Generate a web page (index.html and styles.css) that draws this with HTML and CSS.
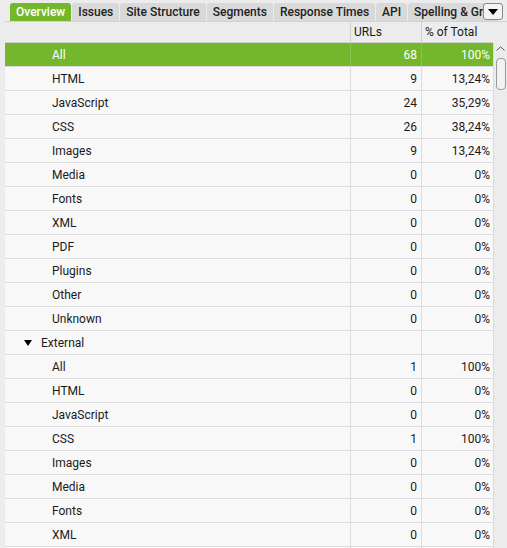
FILE: index.html
```html
<!DOCTYPE html>
<html>
<head>
<meta charset="utf-8">
<link rel="stylesheet" href="styles.css">
</head>
<body>
<div class="app">
  <div class="tabs">
    <div class="tab active">Overview</div>
    <div class="tab">Issues</div>
    <div class="tab">Site Structure</div>
    <div class="tab">Segments</div>
    <div class="tab">Response Times</div>
    <div class="tab">API</div>
    <div class="tab last">Spelling &amp; Grammar</div>
    <div class="menu-btn"><svg width="10" height="6" viewBox="0 0 10 6"><path d="M0 0H10L5 6Z" fill="#000"/></svg></div>
  </div>
  <div class="main">
    <div class="grid">
      <div class="row head"><div class="c name"></div><div class="c num">URLs</div><div class="c pct">% of Total</div></div>
      <div class="row sel"><div class="c name">All</div><div class="c num">68</div><div class="c pct">100%</div></div>
      <div class="row"><div class="c name">HTML</div><div class="c num">9</div><div class="c pct">13,24%</div></div>
      <div class="row"><div class="c name">JavaScript</div><div class="c num">24</div><div class="c pct">35,29%</div></div>
      <div class="row"><div class="c name">CSS</div><div class="c num">26</div><div class="c pct">38,24%</div></div>
      <div class="row"><div class="c name">Images</div><div class="c num">9</div><div class="c pct">13,24%</div></div>
      <div class="row"><div class="c name">Media</div><div class="c num">0</div><div class="c pct">0%</div></div>
      <div class="row"><div class="c name">Fonts</div><div class="c num">0</div><div class="c pct">0%</div></div>
      <div class="row"><div class="c name">XML</div><div class="c num">0</div><div class="c pct">0%</div></div>
      <div class="row"><div class="c name">PDF</div><div class="c num">0</div><div class="c pct">0%</div></div>
      <div class="row"><div class="c name">Plugins</div><div class="c num">0</div><div class="c pct">0%</div></div>
      <div class="row"><div class="c name">Other</div><div class="c num">0</div><div class="c pct">0%</div></div>
      <div class="row"><div class="c name">Unknown</div><div class="c num">0</div><div class="c pct">0%</div></div>
      <div class="row"><div class="c name group"><svg class="tri" width="8" height="6" viewBox="0 0 8 6"><path d="M0 0H8L4 6Z" fill="#000"/></svg>External</div><div class="c num"></div><div class="c pct"></div></div>
      <div class="row"><div class="c name">All</div><div class="c num">1</div><div class="c pct">100%</div></div>
      <div class="row"><div class="c name">HTML</div><div class="c num">0</div><div class="c pct">0%</div></div>
      <div class="row"><div class="c name">JavaScript</div><div class="c num">0</div><div class="c pct">0%</div></div>
      <div class="row"><div class="c name">CSS</div><div class="c num">1</div><div class="c pct">100%</div></div>
      <div class="row"><div class="c name">Images</div><div class="c num">0</div><div class="c pct">0%</div></div>
      <div class="row"><div class="c name">Media</div><div class="c num">0</div><div class="c pct">0%</div></div>
      <div class="row"><div class="c name">Fonts</div><div class="c num">0</div><div class="c pct">0%</div></div>
      <div class="row"><div class="c name">XML</div><div class="c num">0</div><div class="c pct">0%</div></div>
      <div class="row"><div class="c name">PDF</div><div class="c num">0</div><div class="c pct">0%</div></div>
    </div>
    <div class="scrollbar">
      <svg class="up" width="9" height="5" viewBox="0 0 9 5"><path d="M0.5 4.5L4.5 0.8L8.5 4.5" fill="none" stroke="#555" stroke-width="1"/></svg>
      <div class="thumb"></div>
    </div>
  </div>
</div>
</body>
</html>
```
FILE: styles.css
```css
html, body {
  margin: 0;
  padding: 0;
  background: #ececec;
}
body {
  font-family: Roboto, "Liberation Sans", sans-serif;
  font-size: 12px;
  color: #1a1a1a;
}
.app {
  width: 507px;
  height: 548px;
  overflow: hidden;
  position: relative;
}
.tabs {
  display: flex;
  align-items: flex-end;
  height: 21px;
  margin-left: 5px;
  padding-left: 5px;
  gap: 1px;
  border-bottom: 1px solid #d2d2d2;
  white-space: nowrap;
  overflow: hidden;
  position: relative;
}
.tab {
  height: 18px;
  line-height: 18px;
  padding: 0 6px;
  background: #d9d9d9;
  border-radius: 3px 3px 0 0;
  font-weight: 500;
  color: #222;
  flex: none;
}
.tab.last {
  max-width: 78px;
  overflow: hidden;
}
.tab.active {
  background: #74b72c;
  color: #fff;
}
.menu-btn {
  position: absolute;
  left: 478px;
  top: 3px;
  width: 18px;
  height: 15px;
  background: #f4f4f4;
  border: 1px solid #8a8a8a;
  border-radius: 3px;
  display: flex;
  align-items: center;
  justify-content: center;
}
.main {
  display: flex;
  margin-left: 5px;
}
.grid {
  width: 488px;
}
.row {
  display: flex;
  height: 23px;
  border-bottom: 1px solid #dcdcdc;
  background: #f8f8f8;
}
.row.head {
  height: 20px;
  background: #ececec;
  border-bottom: 1px solid #d0d0d0;
}
.row.sel {
  background: #74b72c;
  color: #fff;
}
.c {
  display: flex;
  align-items: center;
  box-sizing: border-box;
}
.name {
  width: 345px;
  padding-left: 47px;
}
.name.group {
  padding-left: 19px;
}
.tri {
  margin-right: 9px;
}
.num {
  width: 71px;
  border-left: 1px solid #dcdcdc;
  justify-content: flex-end;
  padding-right: 4px;
}
.pct {
  width: 72px;
  border-left: 1px solid #dcdcdc;
  justify-content: flex-end;
  padding-right: 3px;
}
.head .num, .head .pct {
  justify-content: flex-start;
  padding-left: 3px;
  border-left-color: #d0d0d0;
}
.sel .num, .sel .pct {
  border-left-color: #8cc450;
}
.scrollbar {
  width: 14px;
  position: relative;
  border-left: 1px solid #dcdcdc;
  margin-top: 21px;
}
.up {
  position: absolute;
  left: 2px;
  top: 3px;
}
.thumb {
  position: absolute;
  left: 2px;
  top: 15px;
  width: 8px;
  height: 30px;
  border: 1px solid #9a9a9a;
  border-radius: 4px;
  background: #f2f2f2;
}
```
